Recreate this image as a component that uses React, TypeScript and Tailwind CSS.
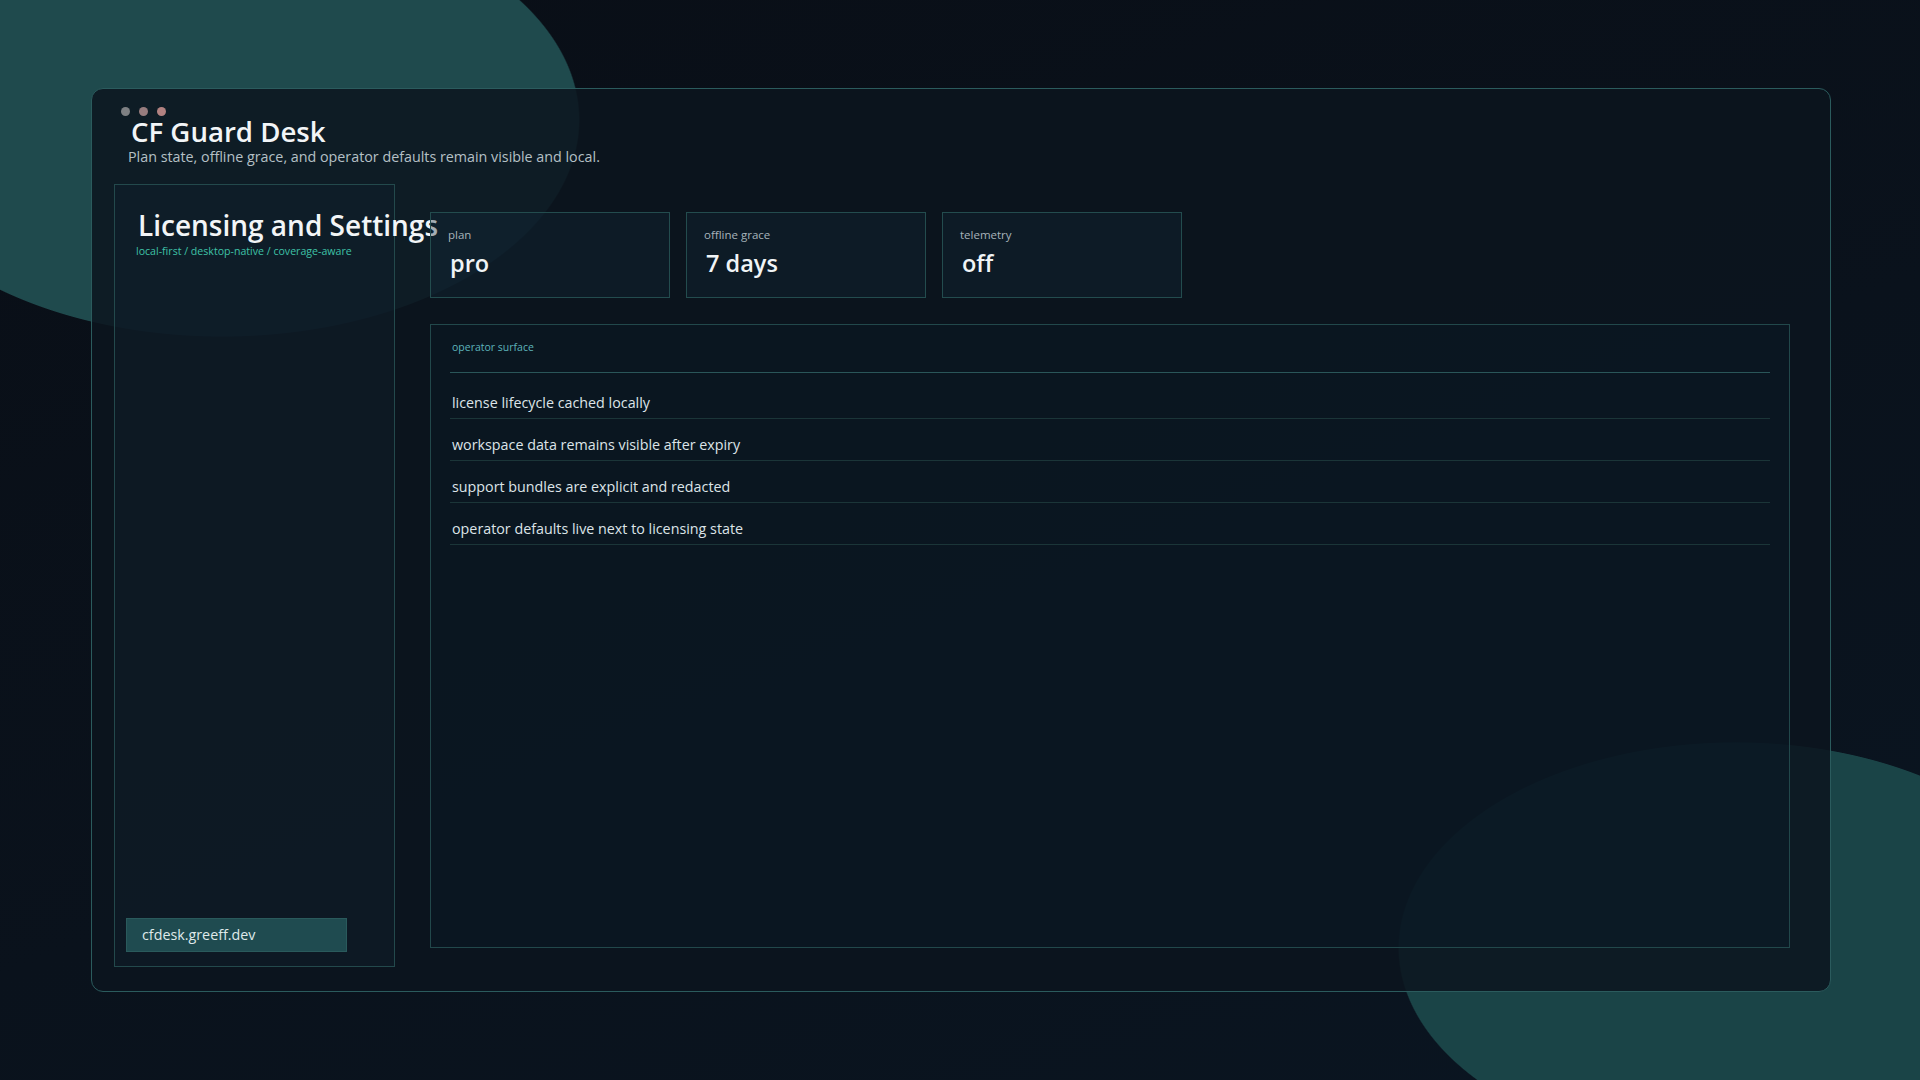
import React from "react";

const rows = [
  "license lifecycle cached locally",
  "workspace data remains visible after expiry",
  "support bundles are explicit and redacted",
  "operator defaults live next to licensing state",
];

const stats = [
  { label: "plan", value: "pro" },
  { label: "offline grace", value: "7 days" },
  { label: "telemetry", value: "off" },
];

export default function App() {
  return (
    <div className="min-h-screen w-full pl-[91px] pr-[89px] py-[88px] font-['Open_Sans','Noto_Sans',sans-serif] bg-[radial-gradient(ellipse_358px_217px_at_222px_120px,#1f4a4d_99.6%,transparent_100%),radial-gradient(ellipse_338px_206px_at_1736px_948px,#1a4447_99.6%,transparent_100%),linear-gradient(160deg,#090e16_0%,#0a121c_55%,#0a1521_100%)]">
      <div className="flex h-[904px] flex-col rounded-[12px] border border-[#2b5b5d] bg-[rgba(12,21,30,0.86)] pl-[22px] pr-[22px] pt-[18px] pb-[24px]">
        <header className="flex flex-col">
          <div className="ml-[7px] flex h-[9px] items-center gap-[9px]">
            <span className="h-[9px] w-[9px] rounded-full bg-[#7e8083]" />
            <span className="h-[9px] w-[9px] rounded-full bg-[#977c7e]" />
            <span className="h-[9px] w-[9px] rounded-full bg-[#b28281]" />
          </div>
          <h1 className="ml-[17px] mt-[1px] text-[27.6px] font-semibold leading-[29px] text-[#f2f5f7]">
            CF Guard Desk
          </h1>
          <p className="ml-[14px] mt-[1px] text-[14.3px] leading-[20px] text-[#b5c0c6]">
            Plan state, offline grace, and operator defaults remain visible and local.
          </p>
        </header>

        <div className="mt-[17px] flex min-h-0 flex-1">
          <aside className="flex w-[281px] shrink-0 flex-col border border-[#23494c] bg-[rgba(16,30,44,0.45)] pb-[14px]">
            <div className="pl-[23px] pt-[25px]">
              <h2 className="whitespace-nowrap text-[28px] font-semibold leading-[30px] text-[#f2f5f7]">
                Licensing and Settings
              </h2>
              <div className="-ml-[2px] mt-[4px] whitespace-nowrap text-[10.6px] leading-[14px] text-[#3ec2a7]">
                local-first / desktop-native / coverage-aware
              </div>
            </div>
            <div className="mt-auto ml-[11px] flex h-[34px] w-[221px] items-center border border-[#2a5a5c] bg-[#1f4b50] pl-[15px] text-[14.3px] leading-[20px] text-[#dfe9ea]">
              cfdesk.greeff.dev
            </div>
          </aside>

          <main className="flex min-w-0 flex-1 flex-col pl-[35px] pr-[18px] pt-[28px] pb-[19px]">
            <div className="flex gap-[16px]">
              {stats.map((s) => (
                <div
                  key={s.label}
                  className="relative h-[86px] w-[240px] border border-[#234c4e] bg-[rgba(16,40,58,0.35)] pl-[17px] pt-[14px]"
                >
                  <div className="text-[11.5px] leading-[16px] text-[#a7b3ba]">{s.label}</div>
                  <div className="ml-[2px] mt-[5px] text-[23.5px] font-semibold leading-[30px] text-[#f0f4f6]">
                    {s.value}
                  </div>
                </div>
              ))}
            </div>

            <section className="mt-[26px] flex min-h-0 flex-1 flex-col border border-[#22484b] bg-[rgba(10,26,40,0.35)] px-[19px]">
              <div className="border-b border-[#2a5659] pb-[18px] pt-[15px] pl-[2px] text-[10.5px] leading-[14px] text-[#5db4bb]">
                operator surface
              </div>
              <ul className="mt-[4px] flex flex-col">
                {rows.map((r) => (
                  <li
                    key={r}
                    className="border-b border-[#1b3538] pb-[5px] pl-[2px] pt-[16px] text-[14.3px] leading-[20px] text-[#dde4e8]"
                  >
                    {r}
                  </li>
                ))}
              </ul>
            </section>
          </main>
        </div>
      </div>
    </div>
  );
}
